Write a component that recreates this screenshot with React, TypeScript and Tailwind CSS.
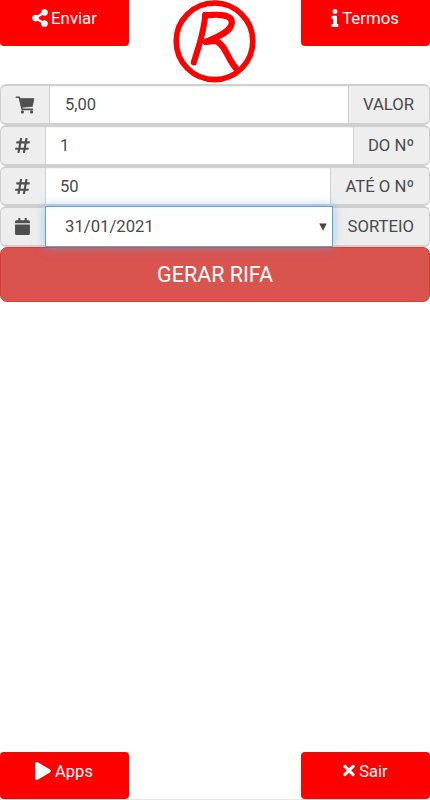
import type { ReactNode } from 'react';
import { FaShareAlt, FaInfo, FaHashtag, FaCalendar, FaPlay, FaTimes } from 'react-icons/fa';

interface CornerButtonProps {
  className: string;
  icon: ReactNode;
  label: string;
}

const CornerButton = ({ className, icon, label }: CornerButtonProps) => (
  <button className={`flex w-[129px] justify-center bg-[#ff0000] leading-5 text-white ${className}`}>
    {icon}
    <span>{label}</span>
  </button>
);

interface FieldRowProps {
  height: string;
  iconWidth: string;
  labelWidth: string;
  icon: ReactNode;
  label: string;
  children: ReactNode;
}

const FieldRow = ({ height, iconWidth, labelWidth, icon, label, children }: FieldRowProps) => (
  <div className={`flex w-full ${height}`}>
    <span className={`flex shrink-0 items-center rounded-l-[6px] border-y-2 border-l border-[#d0d0d0] bg-[#eeeeee] pl-[14px] text-[#4f4f4f] ${iconWidth}`}>
      {icon}
    </span>
    {children}
    <span className={`flex shrink-0 items-center justify-end rounded-r-[6px] border-y-2 border-r border-[#d0d0d0] bg-[#eeeeee] pt-px pr-[15px] text-[16.7px] whitespace-nowrap text-[#4a4a4a] ${labelWidth}`}>
      {label}
    </span>
  </div>
);

const inputClass =
  'min-w-0 flex-1 border-x border-y-2 border-[#d0d0d0] bg-white pt-[2px] text-[16.5px] text-[#4a4a4a] outline-none shadow-[inset_0_1px_1px_rgba(0,0,0,0.05)]';

const CartIcon = () => (
  <svg className="h-[18px] w-5" viewBox="0 0 20 18" fill="none" stroke="currentColor" strokeLinecap="round" strokeLinejoin="round">
    <path d="M1.3 1.3 H4.3 L7.2 13.4 H17.3" strokeWidth="1.6" />
    <path d="M5.2 2.6 H19 L17.3 10.4 L7 11.2 Z" fill="currentColor" strokeWidth="0.8" />
    <circle cx="7.4" cy="15.9" r="1.6" fill="currentColor" stroke="none" />
    <circle cx="16.6" cy="15.9" r="1.6" fill="currentColor" stroke="none" />
  </svg>
);

const RifaLogo = () => (
  <svg width="84" height="84" viewBox="0 0 84 84" fill="none" stroke="#ff0000" strokeLinecap="round" strokeLinejoin="round">
    <circle cx="41.5" cy="41.3" r="38.3" strokeWidth="5.6" />
    <path d="M32.3 14.8 C31.5 25 29 35 26.5 44 L20.8 62.5" strokeWidth="6" />
    <path d="M32.3 15 C37 15.5 41 14.5 45 14.8 C53 15 59 17 58.9 22.5 C58.5 30.5 48 36 32.8 41.8" strokeWidth="6.2" />
    <path d="M32.8 41.8 L43 41 C52 44 54 58 63.5 69" strokeWidth="6.2" />
  </svg>
);

export default function App() {
  return (
    <div className="flex h-[800px] w-[430px] flex-col overflow-hidden border-b border-[#e6e6e6] bg-white font-['Roboto',sans-serif]">
      <header className="flex h-[84px] shrink-0 items-start justify-between">
        <CornerButton className="h-[46px] gap-[3px] rounded-b-[4px] pt-2 text-[16.8px]" icon={<FaShareAlt className="mt-px h-[18px] w-4" />} label="Enviar" />
        <RifaLogo />
        <CornerButton className="h-[46px] gap-[3px] rounded-b-[4px] pt-2 pr-px text-[16.8px]" icon={<FaInfo className="mt-px h-[18px] w-2" />} label="Termos" />
      </header>

      <main className="flex-1">
        <FieldRow height="h-[41px]" iconWidth="w-[49px]" labelWidth="w-[81px]" icon={<CartIcon />} label="VALOR">
          <input className={`${inputClass} pl-[15px]`} defaultValue="5,00" />
        </FieldRow>
        <FieldRow height="h-[41px]" iconWidth="w-[45px]" labelWidth="w-[76px]" icon={<FaHashtag className="h-[17px] w-[15px]" />} label="DO Nº">
          <input className={`${inputClass} pl-[14px]`} defaultValue="1" />
        </FieldRow>
        <FieldRow height="h-[40px]" iconWidth="w-[45px]" labelWidth="w-[99px]" icon={<FaHashtag className="h-[17px] w-[15px]" />} label="ATÉ O Nº">
          <input className={`${inputClass} pl-[14px]`} defaultValue="50" />
        </FieldRow>
        <FieldRow height="h-[41px]" iconWidth="w-[45px]" labelWidth="w-[97px]" icon={<FaCalendar className="h-[17px] w-[15px]" />} label="SORTEIO">
          <div className="relative z-10 flex min-w-0 flex-1 items-center justify-between border border-[#55a8e4] bg-white pr-[5px] pl-[19px] text-[16.7px] text-[#4a4a4a] shadow-[0_0_10px_rgba(102,175,233,0.6)]">
            <span>31/01/2021</span>
            <svg width="8" height="8" viewBox="0 0 8 8" fill="#444">
              <path d="M0.3 0.5 H7.7 L4 7.7 Z" />
            </svg>
          </div>
        </FieldRow>
        <button className="flex h-[55px] w-full items-center justify-center rounded-[7px] border border-[#d43f3a] bg-[#d9534f] pt-px text-[21.5px] text-white">
          GERAR RIFA
        </button>
      </main>

      <footer className="flex h-[47px] shrink-0 justify-between">
        <CornerButton className="h-[47px] gap-1 rounded-[4px] pt-[10px] pr-px text-[16.5px]" icon={<FaPlay className="h-[18px] w-4" />} label="Apps" />
        <CornerButton className="h-[47px] gap-1 rounded-[4px] pt-[10px] text-[16.5px]" icon={<FaTimes className="h-[17px] w-3" />} label="Sair" />
      </footer>
    </div>
  );
}
